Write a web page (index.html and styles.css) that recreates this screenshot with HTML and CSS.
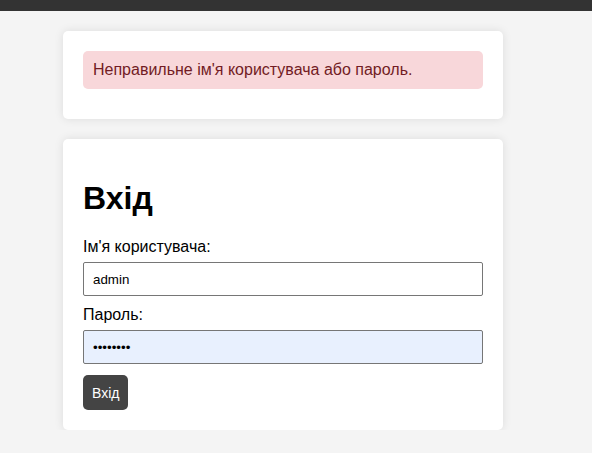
FILE: index.html
```html
<!DOCTYPE html>
<html lang="uk">
<head>
<meta charset="utf-8">
<title>Вхід</title>
<link rel="stylesheet" href="styles.css">
</head>
<body>
<header class="topbar"></header>
<main class="container">
  <section class="card">
    <div class="alert">Неправильне ім'я користувача або пароль.</div>
  </section>
  <section class="card">
    <h1 class="title">Вхід</h1>
    <form class="form">
      <label class="label" for="username">Ім'я користувача:</label>
      <input class="input" id="username" type="text" value="admin">
      <label class="label" for="password">Пароль:</label>
      <input class="input input-filled" id="password" type="password" value="admin123">
      <button class="btn" type="button">Вхід</button>
    </form>
  </section>
</main>
</body>
</html>
```
FILE: styles.css
```css
* { box-sizing: border-box; }
html, body { margin: 0; padding: 0; }
body {
  background: #f4f4f4;
  font-family: "Liberation Sans", Arial, sans-serif;
  font-size: 16px;
  color: #000;
}
.topbar {
  height: 11px;
  background: #333;
}
.container {
  width: 440px;
  margin: 20px 0 0 63px;
  display: flex;
  flex-direction: column;
  gap: 20px;
}
.card {
  background: #fff;
  border-radius: 5px;
  box-shadow: 0 0 10px rgba(0,0,0,0.1);
  padding: 20px;
}
.alert {
  background: #f8d7da;
  color: #721c24;
  padding: 10px;
  border-radius: 5px;
  margin-bottom: 10px;
  line-height: 18px;
}
.title {
  font-size: 32px;
  margin: 21px 0 21px;
  line-height: 37px;
}
.form { display: flex; flex-direction: column; align-items: flex-start; }
.label {
  display: block;
  line-height: 18px;
  margin-bottom: 6px;
}
.input {
  width: 100%;
  height: 34px;
  padding: 0 9px;
  font-family: "Liberation Sans", Arial, sans-serif;
  font-size: 13.33px;
  border: 1px solid #767676;
  border-radius: 2px;
  margin-bottom: 10px;
  background: #fff;
  color: #000;
}
.input-filled { background: #e8f0fe; }
.btn {
  height: 35px;
  margin-top: 1px;
  padding: 0 9px;
  background: #444;
  color: #fff;
  border: none;
  border-radius: 5px;
  font-family: "Liberation Sans", Arial, sans-serif;
  font-size: 14px;
}
```
